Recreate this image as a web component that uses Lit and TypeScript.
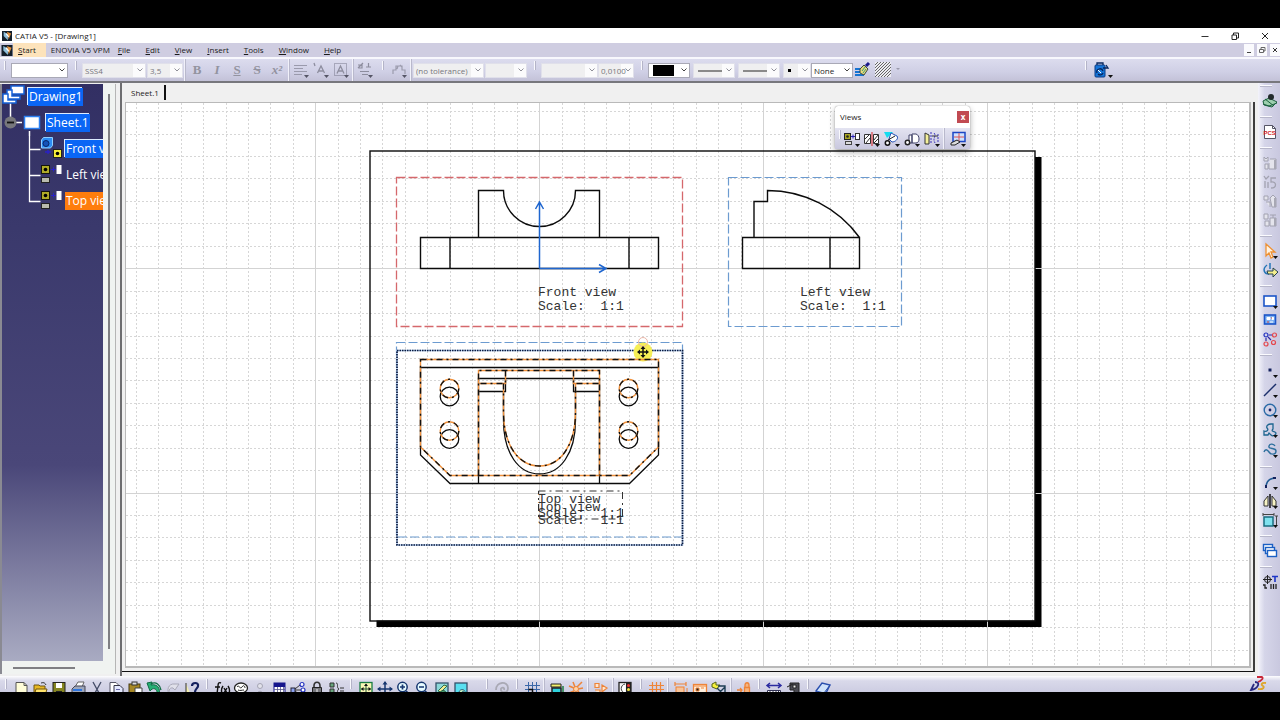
import { LitElement, html, svg, css, nothing } from "lit";
import { customElement, property } from "lit/decorators.js";
import { classMap } from "lit/directives/class-map.js";

const arrow = svg`<path d="M11 13h5l-2.500 3z" fill="#111"/>`;
const greyArrow = svg`<path d="M11 13h5l-2.500 3z" fill="#555566"/>`;

const ICONS: Record<string, unknown> = {
  align: svg`<path d="M1 3.500h13M1 6.500h9M1 9.500h13M1 12.500h8" stroke="#9a9aac"/>${greyArrow}`,
  anchor: svg`<path d="M1 1l1 3M4.500 11L8 4l3.500 7M5.500 9h5" stroke="#8d8d9e" stroke-width="1.300" fill="none"/>${greyArrow}`,
  frame: svg`<rect x="1.500" y="1.500" width="12" height="12" stroke="#77778a" stroke-dasharray="1 1" fill="none"/><path d="M4 11.500L7.500 4l3.500 7.500M5.500 9h4" stroke="#8d8d9e" stroke-width="1.300" fill="none"/>${greyArrow}`,
  symbols: svg`<path d="M1 6l5-5M1 3h4v3H1M9 5h5M11.500 1v4M3 9.500h9M5 12.500h6" stroke="#8d8d9e" stroke-width="1.200" fill="none"/>${greyArrow}`,
  bracket: svg`<path d="M2 12V8h3V4h6v4h3v4M7 4L6 7M9 3l2 2" stroke="#9c9cad" stroke-width="1.200" fill="none"/>${greyArrow}`,
  brush: svg`<path d="M0 7h6M0 10h8M0 13h9" stroke="#1573d2" stroke-width="2"/><path d="M5 7l4-4 4 4-4 6-4-2z" fill="#e9dc7c" stroke="#3a4a42"/><path d="M11 4l3-3" stroke="#1a1a8a" stroke-width="3"/><path d="M7 9l3-4M8 11l3-4" stroke="#3c9a7b"/>`,
  hatch: svg`<rect width="16" height="15" fill="#ececf2"/><path d="M0 3L3 0M0 6L6 0M0 9L9 0M0 12L12 0M0 15L15 0M3 15L16 2M6 15L16 5M9 15l7-7M12 15l4-4" stroke="#555" stroke-width=".9"/>`,
  clip: svg`<rect x="1" y="3" width="10" height="12" rx="1" fill="#1675d8" stroke="#0b3c86"/><path d="M3 3V1h6v2M9 6h5l-2-3M3 11a3 3 0 0 1 6-2M9 11a3 3 0 0 1-5 1" stroke="#07265e" stroke-width="1.300" fill="none"/><path d="M4 8l3 3" stroke="#fff"/><path d="M14 13h5l-2.500 3z" fill="#111"/>`,
  more: svg`<path d="M1 6h4l-2 2z" fill="#9a9aac"/>`,
  // Views palette
  front: svg`<rect x=".5" y="2.500" width="6" height="6" fill="#a9a623" stroke="#222"/><circle cx="3.500" cy="5.500" r="1.300"/><path d="M7 5.500h4M9 3.500v4" stroke="#2a21b8"/><rect x="11.500" y="2.500" width="4" height="6" fill="#fff" stroke="#333"/><rect x="1.500" y="10.500" width="6" height="3" fill="#ddd" stroke="#444"/>`,
  section: svg`<path d="M.500 3.500h6v9h-6zM9.500 3.500h5v9h-5zM1 8l4-4M2 12l4-5M10 9l4-5M10 12l4-4" fill="#fff" stroke="#333"/><path d="M8 1v14" stroke="#d22"/>`,
  detail: svg`<path d="M0 1h9L3 7z" fill="#15dcf0"/><path d="M7 2l6 3c2 3-2 6-5 6l-3-3z" fill="#fff" stroke="#2452b8"/><path d="M4 9l7-4" stroke="#222"/><circle cx="3.500" cy="12" r="2.200" fill="#fff" stroke="#111" stroke-width="1.500"/>`,
  clipping: svg`<path d="M5 4h3v8H5zM8 3h4c4 1 4 9 0 9H8z" fill="#fff" stroke="#3e4066"/><circle cx="3.500" cy="11.500" r="2.200" fill="#fff" stroke="#222" stroke-width="1.500"/>`,
  broken: svg`<path d="M1 2l4 2v9H1z" fill="#f4f09a" stroke="#333"/><path d="M7 1v12M10 2c3 3-2 5 1 10M14 3v8" stroke="#3d35bb" stroke-dasharray="2 1" fill="none"/><path d="M8 5h6" stroke="#333"/>`,
  wizard: svg`<rect x="3" y="1.500" width="12" height="9" fill="#cfe2ff" stroke="#1c46c4" stroke-width="1.500"/><path d="M9 2v8M4 6h10" stroke="#d55"/><path d="M1 12l6-3 3 2-5 3-4 0z" fill="#ddd" stroke="#222"/>`,
  // Right column
  scene: svg`<path d="M1 8l6-3 8 4-5 5-8-2z" fill="#9ccfae" stroke="#1d6140"/><path d="M1 11l6 2 8-3M3 6l9 7" stroke="#1d6140" fill="none"/><circle cx="9" cy="4" r="3" fill="#222a2c"/>`,
  pcs: svg`<path d="M2.500 1.500h8l3 3v10h-11z" fill="#fff" stroke="#556"/><path d="M10.500 1.500v3h3" stroke="#556" fill="none"/><text x="1.500" y="11" font-size="6" font-weight="700" fill="#d01a26" font-family="Liberation Sans, sans-serif">PCS</text>`,
  ghostA: svg`<path d="M2 2l2 2 2-2v4H2zM8 4h6v10H7V8M3 9h3v5H3z" fill="#e4e4ec" stroke="#a2a2b0"/><path d="M12 5h2v9h-2z" fill="#a8a8b4"/>`,
  ghostB: svg`<path d="M2 2l2 3 3-3M3 7v7M6 8v6M14 4H9v4c6-1 6 6 0 6" fill="none" stroke="#a2a2b0" stroke-width="1.300"/>`,
  ghostC: svg`<path d="M2 3h4v4H2zM4 9h4v5M8 5l3-3 3 3v9h-4z" fill="#e4e4ec" stroke="#a2a2b0"/><path d="M12 5h2v9h-2z" fill="#a8a8b4"/>`,
  ghostD: svg`<path d="M2 2h4v5H2zM3 9h4v5H3zM8 3h6M11 3v3M8 6h6v8H8z" fill="#e4e4ec" stroke="#a2a2b0"/><path d="M12 6h2v8h-2z" fill="#a8a8b4"/>`,
  select: svg`<path d="M4 1v12l3-3 2 5 2-1-2-5h4z" fill="#fff3e2" stroke="#ee9133" stroke-width="1.300"/>`,
  rotate: svg`<path d="M8 1v6M5 3C0 7 2 12 7 12" stroke="#2677b8" stroke-width="1.500" fill="none"/><path d="M5 9h6V6l5 4-5 5v-3H6z" fill="#f3ee8d" stroke="#25424f"/>`,
  sheet: svg`<rect x="2" y="3" width="12" height="10" fill="#fff" stroke="#1c55c8" stroke-width="1.600"/>`,
  newview: svg`<rect x="2.500" y="3" width="11" height="9" fill="#7fb2f2" stroke="#1c55c8" stroke-width="1.600"/><path d="M5 5.500h3v2H5zM10 5.500h1.500v2H10zM8 10h3" fill="#fff" stroke="#fff"/><path d="M5 10h2M9 6h1" stroke="#c44"/>`,
  instance: svg`<g fill="none" stroke-width="1.200"><circle cx="4" cy="4" r="2" stroke="#2230c0"/><circle cx="12.500" cy="4" r="2" stroke="#e5474d"/><circle cx="4" cy="13" r="2" stroke="#e5474d"/><circle cx="11.500" cy="11.500" r="2" stroke="#e5474d"/><path d="M7 4h3M6 6l3 3M4 7v3" stroke="#3027a5"/></g>`,
  point: svg`<rect x="6.500" y="6.500" width="3" height="3" fill="#14225c"/>`,
  line: svg`<path d="M2 14L14 2" stroke="#1b2f6b" stroke-width="1.500"/>`,
  circle: svg`<circle cx="8" cy="8" r="5.800" fill="none" stroke="#2a6aa6" stroke-width="1.400"/><circle cx="8" cy="8" r="1.400" fill="#16246a"/>`,
  profile: svg`<path d="M2 13V9c3 1 5-1 3-3-1-2 1-4 4-4h2v5c-3 3 3 2 3 4s-3 4-5 2l-2-2-1 2z" fill="none" stroke="#1d6590" stroke-width="1.300"/>`,
  spline: svg`<path d="M2 10c1-3 3-3 5 0s7 3 7-1-8-1-7-5c1-3 5-2 6 0" fill="none" stroke="#2d6f9d" stroke-width="1.400"/>`,
  corner: svg`<path d="M4 14C4 7 8 4 14 4" fill="none" stroke="#1f5a92" stroke-width="1.600"/><path d="M4 14v-3M14 4h-3" stroke="#14225c" stroke-width="2"/>`,
  mirror: svg`<path d="M8 1v14" stroke="#111" stroke-width="1.500"/><path d="M6 3v10H2V8zM10 3v10h4V8z" fill="#f7f3c5" stroke="#333"/>`,
  constraint: svg`<rect x="2" y="5" width="9" height="9" fill="#7fe1ef" stroke="#1a6c80" stroke-width="1.500"/><path d="M1 2.500h11M1 1v3M12 1v3M14.500 4v10M13 4h3" stroke="#444"/>`,
  dress: svg`<g fill="#fff" stroke="#1b60c4" stroke-width="1.400"><rect x="1.500" y="1.500" width="9" height="6"/><rect x="3.500" y="4.500" width="9" height="6"/><rect x="5.500" y="7.500" width="9" height="6"/></g>`,
  dims: svg`<circle cx="5.500" cy="5.500" r="3" fill="none" stroke="#222"/><path d="M5.500 1v9M1 5.500h9" stroke="#222"/><path d="M10 2.500h6M13 2.500V8" stroke="#1d35c6" stroke-width="1.600"/><path d="M9 10v5M11.500 10v5M14 10v5M1 11h2v3h2" stroke="#222" fill="none" stroke-width="1.300"/>`,
  // Bottom row
  newdoc: svg`<path d="M3 1.500h8l3 3V16H3z" fill="#fffdd8" stroke="#555"/><path d="M11 1.500v3h3" stroke="#555" fill="none"/>`,
  open: svg`<path d="M2 4h5l1 1h5v10H2z" fill="#e8b822" stroke="#6e5510"/><path d="M4 8h11l-2 7H2z" fill="#ffe36b" stroke="#6e5510"/><path d="M9 2c3-1 4 0 5 2" stroke="#333" fill="none"/>`,
  save: svg`<rect x="2" y="1.500" width="12" height="14" fill="#858522" stroke="#222"/><path d="M5 2h6v5H5z" fill="#fff"/><path d="M5 10h6v6H5z" fill="#222"/>`,
  print: svg`<path d="M5 6l3-5h6l-2 5z" fill="#fff" stroke="#666"/><path d="M2 8l3-3h10v6l-3 4H2z" fill="#9ea7bb" stroke="#445"/><path d="M3 9h9" stroke="#2f76e0" stroke-width="2"/><path d="M9 12h4" stroke="#ece04a"/>`,
  cut: svg`<path d="M4 1l6 11M12 1L6 12" stroke="#444c66" stroke-width="1.300"/><circle cx="5" cy="14" r="2" fill="none" stroke="#1c2799"/><circle cx="11" cy="14" r="2" fill="none" stroke="#1c2799"/>`,
  copy: svg`<path d="M2 1.500h6l2 2V12H2z" fill="#fff" stroke="#556"/><path d="M6 4.500h6l3 3V16H6z" fill="#e4e9ff" stroke="#334"/><path d="M8 8.500h4M8 11.500h5" stroke="#66a"/>`,
  paste: svg`<rect x="2" y="3" width="11" height="13" fill="#a68724" stroke="#443a12"/><rect x="5" y="1" width="5" height="3" fill="#ddd" stroke="#333"/><path d="M8 7h7v9H8z" fill="#fff" stroke="#444"/>`,
  undo: svg`<path d="M1 2l3 8 2-2c5-2 6 4 5 8 5-5 2-14-6-12L6 1z" fill="#27ae74" stroke="#0f6b43"/><path d="M5 3c5-3 9 1 10 6" fill="none" stroke="#0f6b43" stroke-width="1.300"/>`,
  redo: svg`<path d="M14 3l-4 6-2-2c-4-1-5 4-3 7-4-4-2-12 5-11z" fill="#e0e0ea" stroke="#a9a9b8"/><path d="M11 11l4 4M11 15l4-4" stroke="#a9a9b8"/>`,
  help: svg`<path d="M2 2v12l3-3 2 4" stroke="#333" fill="#f4efb0"/><path d="M8 5c0-4 7-4 6 0 0 2-3 3-3 6" fill="none" stroke="#14205e" stroke-width="2.200"/><circle cx="11" cy="14" r="1.300" fill="#14205e"/>`,
  formula: svg`<path d="M7 2c-2-1-3 0-3 3l-1 8c0 2-1 3-3 2M1 6h5M9 5c-2 3-2 6 0 9M14 5c2 3 2 6 0 9M10 7l3 5M13 7l-3 5" stroke="#111" stroke-width="1.400" fill="none"/>`,
  comment: svg`<ellipse cx="8" cy="7" rx="6.500" ry="5" fill="#fff" stroke="#222" stroke-width="1.300"/><path d="M4 6c2-3 3 3 5 0s3 0 3 1M5 9c2 1 4 0 6 0" stroke="#222" fill="none"/><path d="M5 12l-2 3" stroke="#222"/>`,
  person: svg`<circle cx="8" cy="5" r="2.500" fill="#e3e3ec" stroke="#a5a5b4"/><path d="M5 14c0-5 6-5 6 0z" fill="#d0d0dc" stroke="#a5a5b4"/>`,
  table: svg`<rect x="3" y="2" width="11" height="14" fill="#fff" stroke="#14148c"/><path d="M3 4h11" stroke="#14148c" stroke-width="4"/><path d="M3 8.500h11M3 11.500h11M6.500 6v10M9.500 6v10M12.500 6v10" stroke="#55558c" stroke-width=".8"/>`,
  relation: svg`<path d="M5 8l5-4M5 9h6M5 10l5 4" stroke="#333"/><rect x="1" y="7" width="4" height="5" fill="#8da2f0" stroke="#223"/><g fill="#fff" stroke="#2633c0" stroke-width="1.200"><circle cx="12" cy="3.500" r="2"/><circle cx="13" cy="9" r="2"/><circle cx="12" cy="14" r="2"/></g>`,
  lock: svg`<path d="M5 8V5c0-5 6-5 6 0v3" fill="none" stroke="#333" stroke-width="1.600"/><path d="M3.500 6.500h9V16h-9z" fill="#77777e" stroke="#222"/><path d="M8 8v5" stroke="#eee"/>`,
  equal: svg`<path d="M2 2h4v4H2zM2 8h4v5H2z" fill="#67a57c" stroke="#333"/><path d="M8 2c3 0 0 5 3 6-3 1 0 6-3 6M12 7h4M12 10h4" stroke="#333" fill="none"/>`,
  fit: svg`<rect x="2" y="1.500" width="12" height="14" fill="#f7f7b4" stroke="#197c42" stroke-width="1.300"/><path d="M3 8h10M8 3v10" stroke="#2a5a36"/><path d="M3 8l2.500-2v4zM13 8l-2.500-2v4zM8 2.500L6 5h4z" fill="#111"/>`,
  pan: svg`<path d="M8 1v14M1 8h14" stroke="#16366f" stroke-width="1.500"/><path d="M8 0l2.500 3.500h-5zM8 16l2.500-3.500h-5zM0 8l3.500-2.500v5zM16 8l-3.500-2.500v5z" fill="#16366f"/>`,
  zoomin: svg`<circle cx="6.500" cy="6" r="4.700" fill="#e7fbff" stroke="#16366f" stroke-width="1.500"/><path d="M4 6h5M6.500 3.500v5M10 10l5 5" stroke="#16366f" stroke-width="1.700"/>`,
  zoomout: svg`<circle cx="6.500" cy="6" r="4.700" fill="#e7fbff" stroke="#16366f" stroke-width="1.500"/><path d="M4 6h5M10 10l5 5" stroke="#16366f" stroke-width="1.700"/>`,
  hideshow: svg`<rect x="2" y="2" width="12" height="14" fill="#8cd8d9" stroke="#35516a" stroke-width="1.300"/><path d="M4 10l6-6 3 1-6 6z" fill="#f1ec94" stroke="#2b6d4c"/><path d="M6 13c0-5 7-4 6 0" fill="#52a578" stroke="#1d5637"/>`,
  swap: svg`<rect x="2" y="2" width="12" height="14" fill="#58dff0" stroke="#35516a" stroke-width="1.300"/><path d="M6 12c0-5 7-4 6 0-2-3-3-2-3 1z" fill="#cef6c4" stroke="#205d78"/>`,
  update: svg`<path d="M2 9c0-9 12-9 12-2 0 6-8 5-7 1 0-2 4-2 3 1M3 14c4 2 8 1 11-3" fill="none" stroke="#a9a9b4" stroke-width="1.800"/>`,
  grid: svg`<path d="M4.500 1v15M8.500 1v15M12.500 1v15M1 4.500h15M1 8.500h15M1 12.500h15" stroke="#3b67a8"/><path d="M4.500 8.500h4v4" stroke="#111" stroke-width="1.500" fill="none"/>`,
  snap: svg`<path d="M2 3h10v3H2z" fill="#f4f06d" stroke="#222"/><rect x="3" y="7" width="9" height="8" fill="#2fd2dd" stroke="#222" stroke-width="1.500"/><path d="M14 5v9" stroke="#1d7c42" stroke-width="1.500"/>`,
  sparkle: svg`<path d="M1 5l5 2M14 1L9 6M1 12l5-2M15 7l-5 1M5 1l2 5M10 10l3 5" stroke="#ee8438" stroke-width="1.500"/><circle cx="8" cy="8" r="2.500" fill="#ffd3a8" stroke="#ee8438"/>`,
  orangebox: svg`<path d="M2 2.500h4v4H2zM2 9h5v6M9 4l5 3-5 4zM8 13h6" fill="#ffe6cf" stroke="#ee8438" stroke-width="1.200"/>`,
  traffic: svg`<rect x="1" y="1.500" width="12" height="14" fill="#f4f4f4" stroke="#222" stroke-width="1.300"/><path d="M7 3C2 4 2 11 7 12" fill="#fff" stroke="#444"/><rect x="8" y="2" width="5" height="14" fill="#222"/><circle cx="10.500" cy="4.500" r="1.500" fill="#e33"/><circle cx="10.500" cy="8.500" r="1.500" fill="#eee340"/>`,
  ogrid: svg`<path d="M4.500 1v15M8.500 1v15M12.500 1v15M1 4.500h15M1 8.500h15M1 12.500h15" stroke="#ee8438" stroke-width="1.200"/>`,
  odim: svg`<path d="M2 3h11M2 1v4M13 1v4" stroke="#ee8438" stroke-width="1.200"/><rect x="3" y="6" width="8" height="9" fill="#f7c399" stroke="#ee8438"/><path d="M14 7v8" stroke="#ee8438"/>`,
  omap: svg`<rect x="1.500" y="3.500" width="13" height="12" fill="#fff0df" stroke="#ee8438" stroke-width="1.300"/><path d="M4 7h3v3H4zM9 7h3M9 11l3 3M2 5h12" stroke="#ee8438"/>`,
  axis: svg`<path d="M1 3l4-2v3h4L6 8 1 6z" fill="#f5f13d" stroke="#55621a"/><path d="M5 15l9-9M6 7l8 8M7 5h7v8" stroke="#1c3d54" stroke-width="1.400" fill="none"/>`,
  olock: svg`<path d="M1 9h5M4 7l2 2-2 3M8.500 6.500h5v9h-5zM9 6V4c0-3 4-3 4 0v2" fill="#f5b47f" stroke="#ee8438" stroke-width="1.300"/>`,
  measure: svg`<path d="M1 4.500h14M4 2L1 4.500 4 7M12 2l3 2.500L12 7" stroke="#2a2aa0" stroke-width="1.500" fill="none"/><path d="M1.500 9.500h13V16h-13zM4 10v3M7 10v3M10 10v3M12.500 10v3" fill="#fff" stroke="#335"/>`,
  inertia: svg`<path d="M5 2h9v14H9V9H5z" fill="#4a4a52" stroke="#222"/><path d="M2 6l6-3M2 13h6M8 4h3v3H8z" stroke="#222" fill="#eee"/>`,
  eraser: svg`<path d="M1 10l6-8 8 2-5 10-7 1z" fill="#cfe2fa" stroke="#2a4fae" stroke-width="1.400"/><path d="M1 10l8 2 6-8" fill="none" stroke="#2a4fae"/>`,
};

@customElement("tool-button")
export class ToolButton extends LitElement {
  static styles = css`
    :host { display: block; flex: none; }
    .btn {
      appearance: none; border: 0; padding: 0; margin: 0; background: none;
      display: flex; align-items: center; justify-content: center;
      width: 100%; height: 100%;
    }
    svg { display: block; flex: none; width: 16px; height: 16px; overflow: visible; }
  `;
  @property() icon = "";
  @property() label = "";
  @property({ type: Boolean }) menu = false;
  render() {
    return html`<button class="btn" type="button" aria-label=${this.label || this.icon}>
      <svg viewBox="0 0 16 16" fill="none" aria-hidden="true">
        <g fill="#222">${ICONS[this.icon]}</g>${this.menu ? arrow : nothing}
      </svg>
    </button>`;
  }
}

@customElement("combo-box")
export class ComboBox extends LitElement {
  static styles = css`
    :host { display: block; flex: none; height: 15px; }
    .combo { display: grid; height: 100%; background: #fbfbfc; border: 1px solid #e0e0ea; box-sizing: border-box; align-items: center; }
    .combo > * { grid-area: 1 / 1; }
    .face { align-self: stretch; margin-right: 12px; background: #efeff0; display: grid; align-items: center; }
    .face svg { display: block; width: 100%; height: 11px; }
    select {
      appearance: none; border: 0; margin: 0; padding: 0 0 0 2px; width: 100%; min-width: 0; height: 13px;
      background: transparent; color: #77777c; opacity: 1;
      font: 8px/13px "Open Sans", "Noto Sans", sans-serif;
    }
    .chev { justify-self: end; width: 8px; height: 6px; margin-right: 1px; pointer-events: none; }
    .on { background: #fff; border-color: #a9a9b6; }
    .on select { color: #1c1c1c; }
    .on .face { background: #fff; }
  `;
  @property() value = "";
  @property() label = "";
  @property() swatch = "";
  @property({ type: Boolean }) on = false;
  render() {
    const sw = this.swatch;
    return html`<div class=${classMap({ combo: true, on: this.on })}>
      <span class="face">
        ${sw ? html`<svg aria-hidden="true">
          ${sw === "fill" ? svg`<rect x="4" y="0" width="21" height="11"/>` : nothing}
          ${sw === "line" ? svg`<rect x="4" y="5" width="24" height="2" fill="#8a8a8a"/>` : nothing}
          ${sw === "dot" ? svg`<rect x="4" y="4" width="3" height="3"/>` : nothing}
        </svg>` : nothing}
      </span>
      <select aria-label=${this.label}><option>${this.value}</option></select>
      <svg class="chev" viewBox="0 0 8 6" aria-hidden="true"><path d="M1.500 1.500L4 4l2.500-2.500" fill="none" stroke=${this.on ? "#444" : "#8f8f98"}/></svg>
    </div>`;
  }
}

const MENUS = ["File", "Edit", "View", "Insert", "Tools", "Window", "Help"];

const BOTTOM: string[][] = [
  ["newdoc", "open", "save", "print", "cut", "copy", "paste", "undo", "redo", "help"],
  ["formula", "comment", "person", "table", "relation", "lock", "equal"],
  ["fit", "pan", "zoomin", "zoomout", "hideshow", "swap", "."],
  ["update"],
  ["grid", "|", "snap", "sparkle", "|", "orangebox", "|", "traffic"],
  ["ogrid", "|", "odim", "omap", "axis", "|", "olock"],
  ["measure", "inertia"],
  ["eraser"],
];

const RIGHT: string[][] = [
  ["scene"], ["pcs"], ["ghostA", "ghostB", "ghostC", "ghostD"],
  ["select+", "rotate"], ["sheet+", "newview", "instance"],
  ["point+", "line+", "circle+", "profile+", "spline+"],
  ["corner+", "mirror+", "constraint+"], ["dress"], ["dims"],
];

const VIEW_ICON = svg`
  <rect x="41.500" y="6.500" width="8" height="8" fill="#b0ac28" stroke="#15150a"/><circle cx="45.500" cy="10.500" r="1.800"/>
  <rect x="41.500" y="18.500" width="8" height="5" fill="#b9bcae" stroke="#222"/>
  <path d="M51 10.500h5M53.500 8v4.500" stroke="#2a21c8"/><rect x="56.500" y="6" width="5" height="9" fill="#fff"/>`;

const X0 = 126, Y0 = 103;
const steps = (n: number) => Array.from({ length: n }, (_, i) => i);

@customElement("drawing-sheet")
export class DrawingSheet extends LitElement {
  static styles = css`
    :host { display: block; }
    .canvas { display: block; width: 100%; height: 100%; background: #fff; }
    .minor { stroke: #d6d6d6; stroke-dasharray: 2 2; }
    .major { stroke: #d3d3d3; }
    .ink { stroke: #0b0b0b; stroke-width: 1.400; fill: none; }
    .thin { stroke: #0b0b0b; stroke-width: 1.300; fill: none; }
    .hot { stroke: #f0913c; stroke-width: 1.400; fill: none; }
    .hotdash { stroke: #111; stroke-width: 1.400; stroke-dasharray: 6 4 2 4; fill: none; }
    .label { font: 13px "Liberation Mono", monospace; fill: #333; white-space: pre; }
    .blue { stroke: #6c9bd0; stroke-width: 1.200; stroke-dasharray: 9 3; fill: none; }
    .red { stroke: #d5686c; stroke-width: 1.300; stroke-dasharray: 9 3; fill: none; }
    .axis { stroke: #1f66cf; stroke-width: 1.500; fill: none; }
  `;
  render() {
    const half = svg`
      <path d="M420.500 359.500H658.500V447L629.500 475.500H450L420.500 447Z"/>
      <path d="M478.500 475.500V370.500H599.500V475.500M505.500 370.500V383.500H478.500M573.500 370.500V383.500H599.500"/>
      <path d="M503.500 383.500V412C503.500 446 519 466 539.500 466S575.500 446 575.500 412V383.500"/>
      <circle cx="449.500" cy="388.500" r="9.300"/><circle cx="628.500" cy="388.500" r="9.300"/>
      <circle cx="449.500" cy="431" r="9.300"/><circle cx="628.500" cy="431" r="9.300"/>`;
    const xs = steps(120).map((i) => ({ at: Math.round(135.900 + i * 22.400) + 0.5, big: i % 10 === 8 }));
    const ys = steps(100).map((i) => ({ at: Math.round(111.200 + i * 22.430) + 0.5, big: i % 10 === 7 }));
    const grid = (big: boolean) => svg`
      ${xs.filter((l) => l.big === big).map((l) => svg`<path class=${big ? "major" : "minor"} d="M${l.at} ${Y0}V3000"/>`)}
      ${ys.filter((l) => l.big === big).map((l) => svg`<path class=${big ? "major" : "minor"} d="M${X0} ${l.at}H4000"/>`)}`;
    return html`<svg class="canvas" role="img" aria-label="Drawing1, Sheet.1">
      <g transform="translate(${-X0} ${-Y0})">
        ${grid(false)}
        <path d="M1035 157h6.500v470H376.500v-6.500H1035z" fill="#000"/>
        ${grid(true)}
        <rect class="ink" x="370" y="151" width="665" height="470"/>

        <rect class="red" x="396.500" y="177.500" width="286" height="149"/>
        <path class="ink" d="M420.500 237.500H658.500V268.500H420.500ZM450 237.500v31M629 237.500v31M478.500 237.500V190.500H503.500A36 36 0 0 0 575.500 190.500H599.500V237.500"/>
        <path class="axis" d="M539.500 268.500V202M535.500 209L539.500 202L543.500 209M539.500 268.500H606M599 264.500L606 268.500L599 272.500"/>
        <text class="label" x="538" y="296">Front view</text>
        <text class="label" x="538" y="310">Scale:  1:1</text>

        <rect class="blue" x="728.500" y="177.500" width="173" height="149"/>
        <path class="ink" d="M742.500 237.500H859.500V268.500H742.500ZM830 237.500v31M754 237.500V201.500H767.500V190.500A113.500 113.500 0 0 1 859.500 237.500"/>
        <text class="label" x="800" y="296">Left view</text>
        <text class="label" x="800" y="310">Scale:  1:1</text>

        <rect class="blue" x="396.500" y="342.500" width="286" height="194.500"/>
        <rect x="397" y="350.500" width="285.500" height="194.500" fill="none" stroke="#a9c3ec" stroke-width="1.500"/>
        <rect x="397" y="350.500" width="285.500" height="194.500" fill="none" stroke="#0d1c3c" stroke-width="1.700" stroke-dasharray="1.500 1"/>
        <circle cx="643" cy="352" r="9.500" fill="#f6ef55"/>
        <g class="thin" transform="translate(0 8)">${half}</g>
        <g class="hot">${half}</g>
        <g class="hotdash">${half}</g>
        <rect x="538.500" y="491" width="84" height="28" fill="none" stroke="#333" stroke-dasharray="7 4 2 4"/>
        <text class="label" x="538" y="503">Top view</text>
        <text class="label" x="538" y="511">Top view</text>
        <text class="label" x="538" y="517">Scale:  1:1</text>
        <text class="label" x="538" y="524">Scale:  1:1</text>
        <circle cx="643" cy="342" r="4.500" fill="none" stroke="#eab6a8"/>
        <path d="M643 347v10M638 352h10" stroke="#111" stroke-width="1.500"/>
        <path d="M643 346l2.500 3h-5zM643 358l2.500-3h-5zM637 352l3-2.500v5zM649 352l-3-2.500v5z" fill="#111"/>
      </g>
    </svg>`;
  }
}

@customElement("app-root")
export class AppRoot extends LitElement {
  static styles = css`
    :host {
      display: flex; flex-direction: column; box-sizing: border-box; height: 100vh;
      padding: 28px 0; background: #000; color: #1b1b1b;
      font: 8px/14px "Open Sans", "Noto Sans", sans-serif;
    }
    button { appearance: none; border: 0; padding: 0; margin: 0; font: inherit; color: inherit; background: none; }
    svg { display: block; }
    .title { display: flex; align-items: center; height: 15px; background: #fff; padding: 0 10px 0 2px; gap: 3px; }
    .title h1 { font: inherit; margin: 0; flex: 1; }
    .win { display: flex; gap: 20px; }
    .win svg { width: 10px; height: 10px; }
    .logo { width: 10px; height: 10px; }
    .menus { display: flex; align-items: center; height: 14px; background: #cfcde1; padding-left: 1px; }
    .menus .logo { width: 12px; height: 11px; }
    .menus nav { display: flex; flex: 1; }
    .menus nav button { height: 14px; padding: 0 7px 0 8px; white-space: nowrap; }
    .menus nav .start { background: #fde3bb; padding: 0 10px 0 5px; }
    .menus nav .lead { padding: 0 0 0 5px; }
    .menus u { text-underline-offset: 1px; }
    .mdi { display: flex; gap: 3px; }
    .mdi button { width: 10px; height: 12px; background: #fafafd; }
    .mdi svg { width: 10px; height: 12px; }

    .bar { display: flex; align-items: center; height: 22px; border-top: 2px solid #f8f8fd; border-bottom: 2px solid #77777d;
      background: linear-gradient(#dcdcee, #cfcfe5 60%, #c3c2d8); overflow: hidden; }
    .bar tool-button, .bar .glyph { width: 20px; height: 18px; }
    .grip { flex: none; width: 2px; height: 9px; background: #f9f9fd; border-right: 1px solid #b4b4c8; box-sizing: border-box; align-self: flex-start; margin: 2px 5px 0 7px; }
    .bar > .grip:first-child { margin-left: 4px; }
    .sep { flex: none; width: 2px; align-self: stretch; background: #f1f1fa; border-right: 1px solid #b9b9cc; box-sizing: border-box; margin: 0 1px; }
    .set { display: flex; align-items: center; }
    .set.pair { gap: 1px; }
    .set.wide { gap: 3px; }
    .glyph { font: 700 13px/18px "Liberation Serif", serif; color: #93939f; flex: none; }
    .glyph.it { font-style: italic; }
    .glyph.st { text-decoration: line-through; }
    .glyph.un { text-decoration: underline; }
    .w57 { width: 57px; } .w64 { width: 64px; } .w36 { width: 36px; } .w71 { width: 71px; } .w42 { width: 42px; } .w28 { width: 28px; }
    .push { flex: 1; }
    .tail { width: 202px; height: 22px; display: flex; align-items: center; flex: none; }

    .main { flex: 1; min-height: 0; display: flex; background: #f0f0f0; }
    .side { width: 113px; flex: none; display: grid; grid-template-columns: 101px 12px; grid-template-rows: 1fr 13px;
      border-left: 2px solid #8a8a92; border-right: 1px solid #b5b5b5; margin: 1px 0 2px; background: #f0f3f1; }
    .tree { margin: 0; padding: 0; list-style: none; overflow: hidden; background: linear-gradient(#322f63, #3a396c 25%, #4a4779 66%, #a9abc2); }
    .tree li { display: flex; align-items: center; height: 26px; white-space: nowrap; font-size: 12px; line-height: 18px; color: #fff; }
    .tree li svg { flex: none; height: 26px; overflow: visible; }
    .l0 svg { width: 26px; } .l1 svg { width: 44px; } .l2 svg { width: 63px; }
    .tag { padding: 0 1px; }
    .tag.sel { background: #0a66f5; box-shadow: -1px -1px #dcecff; }
    .tag.cur { background: #ff7d0c; }
    .vbar { width: 2px; margin: 10px 0 12px 5px; background: #7f7f83; }
    .hbar { height: 2px; margin: 6px 28px 0 11px; background: #7f7f83; }
    .doc { flex: 1; min-width: 0; display: flex; flex-direction: column; margin-left: 4px; border-left: 2px solid #6d6d70; }
    .tabs { display: flex; align-items: center; height: 19px; padding-left: 9px; }
    .tabs button { border-right: 2px solid #111; padding-right: 5px; height: 15px; line-height: 14px; }
    .paper { flex: 1; min-height: 0; display: flex; border-right: 2px solid #3d3d3d; border-bottom: 1px solid #111; margin-bottom: 4px; margin-right: 3px; padding: 0 2px 3px 3px; position: relative; }
    .paper drawing-sheet { flex: 1; min-width: 0; border: 1px solid #b9b9b9; border-width: 1px 2px 2px 1px; }
    .palette { position: absolute; left: 713px; top: 4px; width: 135px; background: #fff; border-radius: 3px; box-shadow: 0 3px 6px #0005, 0 0 1px #0008; }
    .phead { display: flex; align-items: center; justify-content: space-between; height: 22px; padding: 0 1px 0 5px; }
    .close { width: 12px; height: 12px; background: #c14a52; color: #fff; font-weight: 700; line-height: 10px; }
    .ptools { display: flex; align-items: center; height: 21px; background: linear-gradient(#e3e3f1, #c9c8de); }
    .ptools tool-button { width: 20px; height: 18px; }
    .ptools .grip { margin: 2px 1px 0 4px; }
    .ptools .sep { margin: 0 3px 0 1px; }

    .right { flex: none; width: 22px; background: linear-gradient(90deg, #f4f4fb, #d5d5e9 30%, #c9c8df); }
    .rgroup { padding: 5px 0 4px; }
    .rgroup::before { content: ""; display: block; width: 12px; height: 2px; margin: -3px 0 4px 2px; background: #fbfbff; border-bottom: 1px solid #b7b7ca; box-sizing: border-box; }
    .rgroup tool-button { height: 19px; margin-left: 1px; }
    .rgroup.roomy tool-button { height: 20px; }

    .bottom { display: flex; flex: none; align-items: flex-start; height: 16px; overflow: hidden; background: linear-gradient(#fdfdff, #d9d9ea 30%, #cdcde2); }
    .bottom .set { padding-top: 5px; height: 16px; align-items: flex-start; }
    .bottom tool-button { width: 19px; height: 16px; }
    .bottom .grip { margin: 3px 4px 0 5px; height: 10px; }
    .bottom .sep { margin: -3px 2px 0; height: 16px; align-self: flex-start; }
    .gap { width: 11px; }
    .ds { width: 20px; height: 15px; margin-right: 11px; }
  `;

  private logo = html`<svg class="logo" viewBox="0 0 12 12" aria-hidden="true"><rect width="12" height="12" fill="#14202c"/><path d="M2 1l5 3v7L2 6z" fill="#8fc0dc"/><path d="M6 1l5 2-3 7z" fill="#e18f3c"/><path d="M5 3l3 4" stroke="#fff" stroke-width="1.500"/></svg>`;

  private key(name: string) {
    return html`<u>${name[0]}</u>${name.slice(1)}`;
  }

  render() {
    return html`
      <header class="title">
        ${this.logo}
        <h1>CATIA V5 - [Drawing1]</h1>
        <div class="win">
          <button aria-label="Minimize"><svg viewBox="0 0 10 10"><path d="M1.500 5.500h7" stroke="#333"/></svg></button>
          <button aria-label="Restore"><svg viewBox="0 0 10 10"><path d="M2 4h4.500v4.500H2zM3.500 4V2H8.500v5H6.500" fill="none" stroke="#222"/></svg></button>
          <button aria-label="Close"><svg viewBox="0 0 10 10"><path d="M2 2l6 6M8 2L2 8" stroke="#222"/></svg></button>
        </div>
      </header>
      <div class="menus">
        ${this.logo}
        <nav>
          <button class="start">${this.key("Start")}</button>
          <button class="lead">ENOVIA V5 VPM</button>
          ${MENUS.map((m) => html`<button>${this.key(m)}</button>`)}
        </nav>
        <div class="mdi">
          <button aria-label="Minimize document"><svg viewBox="0 0 10 12"><path d="M3 8.500h4" stroke="#444"/></svg></button>
          <button aria-label="Restore document"><svg viewBox="0 0 10 12"><path d="M2.500 5.500h4v3h-4zM4 5V3.500h4V7H7" fill="none" stroke="#666"/></svg></button>
          <button aria-label="Close document"><svg viewBox="0 0 10 12"><path d="M3 4l4 4M7 4L3 8" stroke="#333"/></svg></button>
        </div>
      </div>

      <div class="bar">
        <i class="grip"></i>
        <combo-box class="w57" on label="Style"></combo-box>
        <i class="grip"></i>
        <div class="set pair">
          <combo-box class="w64" label="Font name" value="SSS4"></combo-box>
          <combo-box class="w36" label="Font size" value="3,5"></combo-box>
        </div>
        <i class="sep"></i>
        <button class="glyph">B</button>
        <button class="glyph it">I</button>
        <button class="glyph un">S</button>
        <button class="glyph st">S</button>
        <button class="glyph it">x²</button>
        <i class="sep"></i>
        <tool-button icon="align"></tool-button>
        <tool-button icon="anchor"></tool-button>
        <tool-button icon="frame"></tool-button>
        <i class="sep"></i>
        <tool-button icon="symbols"></tool-button>
        <i class="grip"></i>
        <tool-button icon="bracket"></tool-button>
        <i class="sep"></i>
        <div class="set pair">
          <combo-box class="w71" label="Tolerance" value="(no tolerance)"></combo-box>
          <combo-box class="w42" label="Tolerance value"></combo-box>
        </div>
        <i class="grip"></i>
        <div class="set">
          <combo-box class="w57" label="Unit"></combo-box>
          <combo-box class="w36" label="Precision" value="0,0100"></combo-box>
        </div>
        <i class="grip"></i>
        <div class="set wide">
          <combo-box class="w42" on label="Color" swatch="fill"></combo-box>
          <combo-box class="w42" label="Line thickness" swatch="line"></combo-box>
          <combo-box class="w42" label="Line type" swatch="line"></combo-box>
          <combo-box class="w28" label="Point symbol" swatch="dot"></combo-box>
        </div>
        <combo-box class="w42" on label="Layer" value="None"></combo-box>
        <tool-button icon="brush"></tool-button>
        <tool-button icon="hatch"></tool-button>
        <tool-button icon="more"></tool-button>
        <span class="push"></span>
        <div class="tail">
          <i class="grip"></i>
          <tool-button icon="clip"></tool-button>
        </div>
      </div>

      <div class="main">
        <aside class="side">
          <ul class="tree">
            <li class="l0">
              <svg viewBox="2 0 26 26"><path d="M10.500 17v9" stroke="#fff" stroke-width="1.500"/><g fill="#fff" stroke="#1560d6" stroke-width="1.500"><path d="M11 2h13v8H11z"/><path d="M7 6h5v6h8v3H7z"/><path d="M3 10h5v6h8v3H3z"/></g></svg>
              <span class="tag sel">Drawing1</span>
            </li>
            <li class="l1">
              <svg viewBox="2 0 44 26"><path d="M10.500 0v8M16 12.500h6M29.500 21v5" stroke="#fff" stroke-width="1.500"/><circle cx="10.500" cy="12.500" r="6" fill="#77777c"/><path d="M7 12.500h7" stroke="#111" stroke-width="1.800"/><rect x="24.500" y="6.500" width="15" height="12" fill="#fff" stroke="#2c7ff0" stroke-width="1.500"/></svg>
              <span class="tag sel">Sheet.1</span>
            </li>
            <li class="l2">
              <svg viewBox="2 0 63 26"><path d="M29.500 0v26M29.500 13.500h11" stroke="#fff" stroke-width="1.300"/><path d="M41.500 4l2-2.500h9v8l-2 2.500h-9z" fill="#2c8df5" stroke="#8fd0ff"/><circle cx="46" cy="7.500" r="3" fill="#1453b8" stroke="#0a2767"/><path d="M45 16h6M48 14v4" stroke="#2a21c8" stroke-width="1.300"/><rect x="53.500" y="13.500" width="8" height="8" fill="#f6ee3a" stroke="#222"/><circle cx="57.500" cy="17.500" r="1.800"/></svg>
              <span class="tag sel">Front view</span>
            </li>
            <li class="l2">
              <svg viewBox="2 0 63 26"><path d="M29.500 0v26M29.500 13.500h11" stroke="#fff" stroke-width="1.300"/><g transform="translate(0 -3)">${VIEW_ICON}</g></svg>
              <span class="tag">Left view</span>
            </li>
            <li class="l2">
              <svg viewBox="2 0 63 26"><path d="M29.500 0v13.500h11" fill="none" stroke="#fff" stroke-width="1.300"/><g transform="translate(0 -3)">${VIEW_ICON}</g></svg>
              <span class="tag cur">Top view</span>
            </li>
          </ul>
          <div class="vbar"></div>
          <div class="hbar"></div>
        </aside>

        <section class="doc">
          <div class="tabs"><button>Sheet.1</button></div>
          <div class="paper">
            <drawing-sheet></drawing-sheet>
            <div class="palette">
              <div class="phead"><span>Views</span><button class="close" aria-label="Close Views">x</button></div>
              <div class="ptools">
                <i class="grip"></i>
                ${["front", "section", "detail", "clipping", "broken"].map((n) => html`<tool-button icon=${n} menu></tool-button>`)}
                <i class="sep"></i>
                <tool-button icon="wizard" menu></tool-button>
              </div>
            </div>
          </div>
        </section>

        <aside class="right">
          ${RIGHT.map((g) => html`<div class=${classMap({ rgroup: true, roomy: g.length === 5 })}>
            ${g.map((n) => html`<tool-button icon=${n.replace("+", "")} ?menu=${n.endsWith("+")}></tool-button>`)}
          </div>`)}
        </aside>
      </div>

      <footer class="bottom">
        ${BOTTOM.map((g) => html`<i class="grip"></i><div class="set">
          ${g.map((n) => n === "|" ? html`<i class="sep"></i>` : n === "." ? html`<span class="gap"></span>` : html`<tool-button icon=${n}></tool-button>`)}
        </div>`)}
        <span class="push"></span>
        <svg class="ds" viewBox="0 0 20 15"><path d="M8 1h5c2 1-1 4-4 5" fill="none" stroke="#c8283a" stroke-width="1.800"/><path d="M6 6c6 0 3 7-4 8l3-6" fill="none" stroke="#2a2a80" stroke-width="1.800"/><path d="M17 7c-5-1-5 2-3 3s0 4-5 3" fill="none" stroke="#dda62c" stroke-width="1.800"/></svg>
      </footer>
    `;
  }
}
